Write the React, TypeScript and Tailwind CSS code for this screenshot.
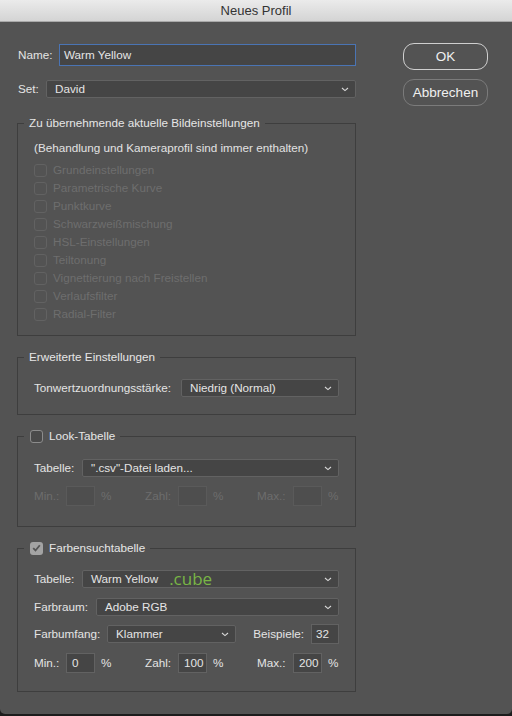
import type { ReactNode } from "react";

const font = { fontFamily: '"Liberation Sans", Arial, sans-serif' };

function Chevron() {
  return (
    <svg width="8" height="5" viewBox="0 0 8 5" className="shrink-0">
      <path d="M1 1l3 2.6L7 1" fill="none" stroke="#d8d8d8" strokeWidth="1.1" />
    </svg>
  );
}

function Select({ value, className = "", extra }: { value: string; className?: string; extra?: ReactNode }) {
  return (
    <div
      className={`flex h-[18px] items-center justify-between rounded-[2px] border border-[#626262] bg-[#454545] pl-[8px] pr-[6px] text-[#e4e4e4] ${className}`}
    >
      <span className="flex items-center whitespace-nowrap">
        {value}
        {extra}
      </span>
      <Chevron />
    </div>
  );
}

function Box({ value, disabled }: { value?: string; disabled?: boolean }) {
  return (
    <div
      className={`flex h-[20px] w-[29px] items-center border pl-[5px] ${
        disabled ? "border-[#5a5a5a] bg-[#4e4e4e]" : "border-[#626262] bg-[#454545] text-[#e4e4e4]"
      }`}
    >
      {value}
    </div>
  );
}

function Check({ checked, disabled }: { checked?: boolean; disabled?: boolean }) {
  if (checked) {
    return (
      <span className="flex h-[13px] w-[13px] shrink-0 items-center justify-center rounded-[3px] bg-[#a3a3a3]">
        <svg width="9" height="8" viewBox="0 0 9 8">
          <path d="M1.2 4.2l2.3 2.3L7.8 1.2" fill="none" stroke="#555" strokeWidth="1.8" />
        </svg>
      </span>
    );
  }
  return (
    <span
      className={`h-[13px] w-[13px] shrink-0 rounded-[3px] border ${
        disabled ? "border-[#626262]" : "border-[#8c8c8c] bg-[#4a4a4a]"
      }`}
    />
  );
}

function Group({ legend, className = "", children }: { legend: ReactNode; className?: string; children: ReactNode }) {
  return (
    <fieldset className={`border border-[#3e3e3e] px-[16px] ${className}`}>
      <legend className="ml-[-10px] flex h-[14px] items-center pl-[5px] pr-[5px] leading-[14px] text-[#e6e6e6]">
        {legend}
      </legend>
      {children}
    </fieldset>
  );
}

function PercentRow({ values, disabled }: { values?: string[]; disabled?: boolean }) {
  const c = disabled ? "text-[#6d6d6d]" : "text-[#e4e4e4]";
  return (
    <div className={`flex items-center ${c}`}>
      <div className="flex w-[111px] items-center">
        <span className="w-[32px]">Min.:</span>
        <Box value={values?.[0]} disabled={disabled} />
        <span className="ml-[6px]">%</span>
      </div>
      <div className="flex w-[112px] items-center">
        <span className="w-[33px]">Zahl:</span>
        <Box value={values?.[1]} disabled={disabled} />
        <span className="ml-[6px]">%</span>
      </div>
      <div className="flex items-center">
        <span className="w-[36px]">Max.:</span>
        <Box value={values?.[2]} disabled={disabled} />
        <span className="ml-[6px]">%</span>
      </div>
    </div>
  );
}

const settings = [
  "Grundeinstellungen",
  "Parametrische Kurve",
  "Punktkurve",
  "Schwarzweißmischung",
  "HSL-Einstellungen",
  "Teiltonung",
  "Vignettierung nach Freistellen",
  "Verlaufsfilter",
  "Radial-Filter",
];

export default function App() {
  return (
    <div className="h-[716px] w-[512px] bg-[#1c1c1c] text-[11.7px] leading-[14px]" style={font}>
      <div className="flex h-[714px] flex-col overflow-hidden rounded-b-[5px] bg-[#535353]">
        <div className="flex h-[22px] shrink-0 items-center justify-center border-b border-[#a9a9a9] bg-gradient-to-b from-[#ebebeb] to-[#d4d4d4] text-[13px] text-[#333]">
          Neues Profil
        </div>

        <div className="flex items-start">
          <div className="ml-[17px] w-[339px] pt-[22px]">
            <div className="flex items-center text-[#e4e4e4]">
              <span className="w-[42px] pl-px">Name:</span>
              <div className="flex h-[22px] flex-1 items-center border border-[#4a74b4] bg-[#454545] pl-[4px]">
                Warm Yellow
              </div>
            </div>
            <div className="mt-[14px] flex items-center text-[#e4e4e4]">
              <span className="w-[29px] pl-px">Set:</span>
              <Select value="David" className="flex-1" />
            </div>

            <Group legend="Zu übernehmende aktuelle Bildeinstellungen" className="mt-[18px] pb-[12px]">
              <div className="pt-[11px] text-[#e2e2e2]">(Behandlung und Kameraprofil sind immer enthalten)</div>
              <div className="mt-[6px] flex flex-col">
                {settings.map((s) => (
                  <div key={s} className="flex h-[18px] items-center gap-[6px] text-[#6e6e6e]">
                    <Check disabled />
                    <span>{s}</span>
                  </div>
                ))}
              </div>
            </Group>

            <Group legend="Erweiterte Einstellungen" className="mt-[14px] pb-[17px]">
              <div className="flex items-center pt-[15px] text-[#e4e4e4]">
                <span className="w-[147px]">Tonwertzuordnungsstärke:</span>
                <Select value="Niedrig (Normal)" className="flex-1" />
              </div>
            </Group>

            <Group
              legend={
                <span className="flex items-center gap-[6px] pl-px">
                  <Check />
                  Look-Tabelle
                </span>
              }
              className="mt-[14px] pb-[20px]"
            >
              <div className="flex items-center pt-[16px] text-[#e4e4e4]">
                <span className="w-[48px]">Tabelle:</span>
                <Select value={'".csv"-Datei laden...'} className="flex-1" />
              </div>
              <div className="mt-[9px]">
                <PercentRow disabled />
              </div>
            </Group>

            <Group
              legend={
                <span className="flex items-center gap-[6px] pl-px">
                  <Check checked />
                  Farbensuchtabelle
                </span>
              }
              className="mt-[14px] pb-[18px]"
            >
              <div className="flex items-center pt-[15px] text-[#e4e4e4]">
                <span className="w-[48px]">Tabelle:</span>
                <Select
                  value="Warm Yellow"
                  className="flex-1"
                  extra={
                    <span
                      className="ml-[11px] text-[17px] leading-[14px] text-[#79b546]"
                      style={{ fontFamily: '"Open Sans", sans-serif' }}
                    >
                      .cube
                    </span>
                  }
                />
              </div>
              <div className="mt-[10px] flex items-center text-[#e4e4e4]">
                <span className="w-[62px]">Farbraum:</span>
                <Select value="Adobe RGB" className="flex-1" />
              </div>
              <div className="mt-[8px] flex items-center text-[#e4e4e4]">
                <span className="w-[73px]">Farbumfang:</span>
                <Select value="Klammer" className="w-[129px]" />
                <span className="ml-auto">Beispiele:</span>
                <div className="ml-[7px] flex h-[20px] w-[28px] items-center border border-[#626262] bg-[#454545] pl-[4px]">
                  32
                </div>
              </div>
              <div className="mt-[9px]">
                <PercentRow values={["0", "100", "200"]} />
              </div>
            </Group>
          </div>

          <div className="ml-[47px] flex flex-col gap-[9px] pt-[21px] text-[13.5px] text-[#f0f0f0]">
            <button className="flex h-[27px] w-[85px] items-center justify-center rounded-[11px] border border-[#cfcfcf]">
              OK
            </button>
            <button className="flex h-[27px] w-[85px] items-center justify-center rounded-[11px] border border-[#7b7b7b]">
              Abbrechen
            </button>
          </div>
        </div>
      </div>
    </div>
  );
}
